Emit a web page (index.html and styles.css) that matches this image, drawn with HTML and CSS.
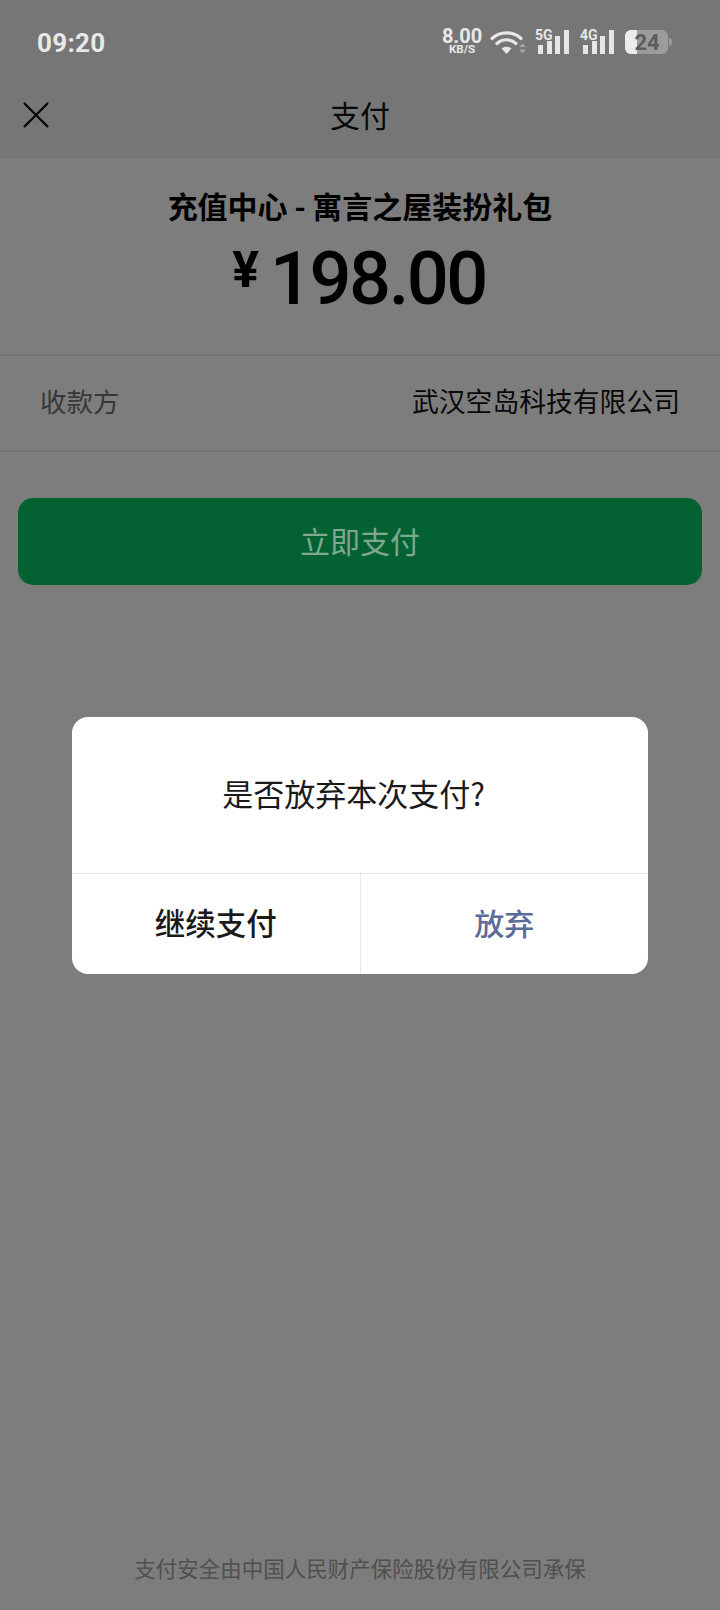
FILE: index.html
```html
<!DOCTYPE html>
<html lang="zh-CN">
<head>
    <meta charset="UTF-8">
    <meta name="viewport" content="width=device-width, initial-scale=1.0">
    <title>支付</title>
    <link rel="stylesheet" href="styles.css">
</head>
<body>
    <div class="page">
        <div class="top">
            <div class="status-bar">
                <span class="time">09:20</span>
                <div class="status-icons">
                    <div class="speed">
                        <span class="speed-num">8.00</span>
                        <span class="speed-unit">KB/S</span>
                    </div>
                    <svg class="wifi" width="36" height="26" viewBox="0 0 36 26">
                        <g fill="none" stroke="#e6e6e6" stroke-width="3.2" stroke-linecap="round">
                            <path d="M2 9.5C10 2 23 2 31 9.5"/>
                            <path d="M7 14.5C12.5 9.5 20.5 9.5 26 14.5"/>
                        </g>
                        <path d="M11.5 19.5C14.5 17 18.5 17 21.5 19.5L16.5 25Z" fill="#e6e6e6"/>
                        <path d="M29 18L32.5 14.5L36 18Z M29 20.5L32.5 24L36 20.5Z" fill="#a8a8a8"/>
                    </svg>
                    <svg class="signal" width="36" height="30" viewBox="0 -4 36 30">
                        <text x="1" y="11" class="net">5G</text>
                        <rect x="4" y="16" width="5" height="9" fill="#e6e6e6"/>
                        <rect x="13" y="12" width="5" height="13" fill="#e6e6e6"/>
                        <rect x="21" y="7" width="5" height="18" fill="#e6e6e6"/>
                        <rect x="30" y="1" width="5" height="24" fill="#e6e6e6"/>
                    </svg>
                    <svg class="signal" width="36" height="30" viewBox="0 -4 36 30">
                        <text x="1" y="11" class="net">4G</text>
                        <rect x="4" y="16" width="5" height="9" fill="#e6e6e6"/>
                        <rect x="13" y="12" width="5" height="13" fill="#e6e6e6"/>
                        <rect x="21" y="7" width="5" height="18" fill="#e6e6e6"/>
                        <rect x="30" y="1" width="5" height="24" fill="#e6e6e6"/>
                    </svg>
                    <svg class="battery" width="47" height="24" viewBox="0 0 47 24">
                        <rect x="0" y="0" width="43" height="24" rx="6" fill="#9c9c9c"/>
                        <path d="M6 0H12V24H6A6 6 0 0 1 0 18V6A6 6 0 0 1 6 0Z" fill="#ececec"/>
                        <path d="M44 8A3 4 0 0 1 47 12A3 4 0 0 1 44 16Z" fill="#9c9c9c"/>
                        <text x="22" y="19.5" class="level">24</text>
                    </svg>
                </div>
            </div>
            <div class="nav">
                <svg class="close" width="26" height="26" viewBox="0 0 26 26">
                    <path d="M1 1L25 25M25 1L1 25" fill="none" stroke="#111" stroke-width="2.4"/>
                </svg>
                <span class="nav-title">支付</span>
            </div>
        </div>

        <div class="order">
            <div class="order-title">充值中心 - 寓言之屋装扮礼包</div>
            <div class="amount">
                <span class="currency">¥</span>
                <span class="price">198.00</span>
            </div>
        </div>

        <div class="payee">
            <span class="payee-label">收款方</span>
            <span class="payee-name">武汉空岛科技有限公司</span>
        </div>

        <button class="pay-btn"><span class="pay-label">立即支付</span></button>

        <div class="footer">支付安全由中国人民财产保险股份有限公司承保</div>

        <div class="overlay"></div>

        <div class="dialog">
            <div class="dialog-msg">是否放弃本次支付?</div>
            <div class="dialog-actions">
                <div class="dialog-btn keep">继续支付</div>
                <div class="dialog-btn quit">放弃</div>
            </div>
        </div>
    </div>
</body>
</html>
```

FILE: styles.css
```css
* {
    box-sizing: border-box;
}
body {
    margin: 0;
    font-family: "Noto Sans CJK SC", Roboto, sans-serif;
    color: #111;
}
.page {
    position: relative;
    width: 720px;
    height: 1610px;
    background-color: #fafafa;
    display: flex;
    flex-direction: column;
    overflow: hidden;
}
.top {
    background-color: #ededed;
    height: 158px;
}
.status-bar {
    position: relative;
    z-index: 2;
    height: 76px;
    padding: 8px 48px 0 37px;
    display: flex;
    align-items: center;
    justify-content: space-between;
    color: #e8e8e8;
}
.time {
    font-family: Roboto, sans-serif;
    font-size: 26px;
    font-weight: 700;
    letter-spacing: 0.3px;
    margin-top: 1px;
}
.status-icons {
    display: flex;
    align-items: center;
}
.speed {
    display: flex;
    flex-direction: column;
    align-items: center;
    width: 42px;
    font-family: Roboto, sans-serif;
    font-weight: 700;
    margin-right: 7px;
}
.speed-num {
    font-size: 20px;
    line-height: 15px;
}
.speed-unit {
    font-size: 11.5px;
    line-height: 11px;
}
.wifi {
    margin-right: 8px;
}
.signal {
    margin-top: -4px;
    margin-right: 9px;
}
.battery {
    margin-left: 1px;
}
.net {
    font-family: Roboto, sans-serif;
    font-size: 14px;
    font-weight: 700;
    fill: #e6e6e6;
}
.level {
    font-family: Roboto, sans-serif;
    font-size: 22px;
    font-weight: 700;
    fill: #5c5c5c;
    text-anchor: middle;
}
.nav {
    position: relative;
    height: 82px;
    padding-bottom: 6px;
    display: flex;
    align-items: center;
    justify-content: center;
}
.close {
    position: absolute;
    left: 23px;
    top: 26px;
}
.nav-title {
    font-size: 30px;
}
.order {
    height: 196px;
    padding-top: 24px;
    text-align: center;
    color: #000;
}
.order-title {
    font-size: 30px;
    font-weight: 700;
    line-height: 46px;
}
.amount {
    display: flex;
    justify-content: center;
    align-items: flex-start;
    gap: 11px;
    margin-top: 6px;
    margin-right: 2px;
}
.currency {
    font-family: Roboto, sans-serif;
    font-size: 50px;
    font-weight: 700;
    line-height: 72px;
}
.price {
    font-family: Roboto, sans-serif;
    font-size: 74px;
    font-weight: 500;
    line-height: 90px;
    letter-spacing: -2.5px;
}
.payee {
    height: 98px;
    padding: 0 40px 5px;
    display: flex;
    align-items: center;
    justify-content: space-between;
    border-top: 2px solid #e8e8e8;
    border-bottom: 2px solid #e8e8e8;
    font-size: 26.5px;
}
.payee-name {
    font-size: 26.8px;
}
.payee-label {
    color: #707070;
}
.pay-btn {
    display: block;
    width: 684px;
    height: 87px;
    margin: 46px 18px 0;
    padding: 0 0 4px;
    border: none;
    border-radius: 15px;
    background-color: #08c464;
    font-family: inherit;
    font-size: 30px;
}
/* sits above the overlay, the reference label keeps a green tint */
.pay-label {
    position: relative;
    z-index: 2;
    color: #7fa88f;
}
.footer {
    margin-top: auto;
    padding-bottom: 26px;
    text-align: center;
    font-size: 21.5px;
    line-height: 32px;
    color: #a0a0a0;
}
.overlay {
    position: absolute;
    inset: 0;
    z-index: 1;
    background-color: rgba(0, 0, 0, 0.5);
}
.dialog {
    position: absolute;
    z-index: 3;
    left: 72px;
    top: 717px;
    width: 576px;
    height: 257px;
    background-color: #fff;
    border-radius: 16px;
    overflow: hidden;
    display: flex;
    flex-direction: column;
}
.dialog-msg {
    height: 156px;
    padding: 0 13px 5px 0;
    display: flex;
    align-items: center;
    justify-content: center;
    font-size: 31px;
    color: #1a1a1a;
}
.dialog-actions {
    flex: 1;
    display: flex;
    border-top: 1px solid #e3e3e3;
}
.dialog-btn {
    flex: 1;
    padding-bottom: 4px;
    display: flex;
    align-items: center;
    justify-content: center;
    font-size: 30px;
}
.keep {
    font-weight: 500;
    font-size: 30.5px;
    color: #1a1a1a;
    border-right: 1px solid #e9e9e9;
}
.quit {
    font-weight: 500;
    color: #5b6c98;
}
```
